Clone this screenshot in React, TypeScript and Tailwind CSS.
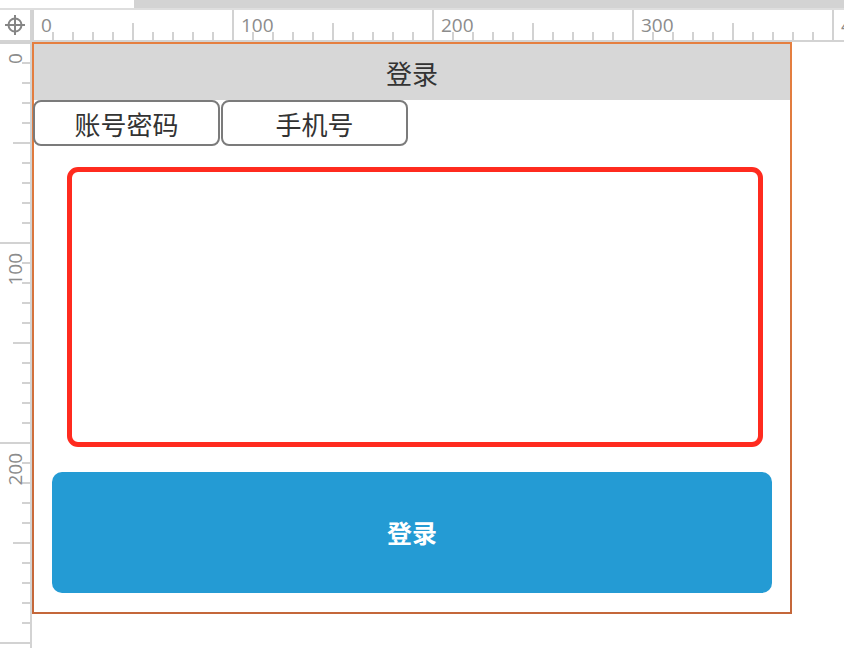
import React from "react";

const CJK = { fontFamily: '"Noto Sans CJK SC", "Noto Sans", sans-serif' };

function TopRuler() {
  const ticks = Array.from({ length: 41 }, (_, k) => k);
  return (
    <svg width="812" height="30" className="block">
      {ticks.map((k) => {
        const x = 1 + k * 20;
        const y1 = k % 10 === 0 ? 0 : k % 5 === 0 ? 13 : 22;
        return <line key={k} x1={x} y1={y1} x2={x} y2={30} stroke="#d2d2d2" strokeWidth="2" />;
      })}
      {[0, 100, 200, 300, 400].map((n, i) => (
        <text
          key={n}
          x={1 + i * 200 + 8}
          y={22}
          fontSize="19"
          fill="#8c8c8c"
          fontFamily='"Open Sans", sans-serif'
        >
          {n}
        </text>
      ))}
    </svg>
  );
}

function LeftRuler() {
  const ticks = Array.from({ length: 31 }, (_, k) => k);
  return (
    <svg width="30" height="606" className="block">
      {ticks.map((k) => {
        const y = 1 + k * 20;
        const x1 = k % 10 === 0 ? 0 : k % 5 === 0 ? 13 : 22;
        return <line key={k} x1={x1} y1={y} x2={30} y2={y} stroke="#d2d2d2" strokeWidth="2" />;
      })}
      {[0, 100, 200].map((n, i) => {
        const y = 1 + i * 200 + 10;
        return (
          <text
            key={n}
            x={22}
            y={y}
            fontSize="19"
            fill="#8c8c8c"
            textAnchor="end"
            transform={`rotate(-90 22 ${y})`}
            fontFamily='"Open Sans", sans-serif'
          >
            {n}
          </text>
        );
      })}
    </svg>
  );
}

function Crosshair() {
  return (
    <svg width="30" height="30" viewBox="0 0 30 30">
      <circle cx="15" cy="15" r="6.5" fill="none" stroke="#858585" strokeWidth="2" />
      <line x1="5" y1="15" x2="25" y2="15" stroke="#858585" strokeWidth="2" />
      <line x1="15" y1="5" x2="15" y2="25" stroke="#858585" strokeWidth="2" />
    </svg>
  );
}

export default function App() {
  return (
    <div className="w-[844px] h-[648px] bg-white flex flex-col overflow-hidden">
      {/* top strip */}
      <div className="h-[8px] flex">
        <div className="w-[134px] bg-white" />
        <div className="flex-1 bg-[#d3d3d3]" />
      </div>
      <div className="h-[2px] bg-[#dedede]" />

      {/* ruler row */}
      <div className="h-[32px] flex border-b-2 border-[#d3d3d3]">
        <div className="w-[32px] border-r-2 border-[#d3d3d3] flex items-center justify-center">
          <Crosshair />
        </div>
        <TopRuler />
      </div>

      <div className="flex-1 flex">
        <div className="w-[32px] border-r-2 border-[#d3d3d3]">
          <LeftRuler />
        </div>

        <div className="flex-1">
          <div className="w-[760px] h-[572px] p-[2px] bg-linear-to-b from-[#e57f40] to-[#c4673a]">
            <div className="h-full bg-white flex flex-col" style={CJK}>
              <div className="h-[56px] bg-[#d7d7d7] flex items-center justify-center text-[26px] text-[#333]">
                登录
              </div>

              <div className="flex gap-[1px] -ml-px">
                <button className="w-[187px] h-[46px] border-2 border-[#7b7b7b] rounded-[8px] flex items-center justify-center text-[26px] text-[#333]">
                  账号密码
                </button>
                <button className="w-[187px] h-[46px] border-2 border-[#7b7b7b] rounded-[8px] flex items-center justify-center text-[26px] text-[#333]">
                  手机号
                </button>
              </div>

              <div className="mt-[21px] ml-[33px] w-[696px] h-[280px] border-[5px] border-[#ff2b1f] rounded-[11px]" />

              <button className="mt-[25px] ml-[18px] w-[720px] h-[121px] rounded-[10px] bg-[#249bd4] text-white font-bold text-[25px] flex items-center justify-center">
                登录
              </button>
            </div>
          </div>
        </div>
      </div>
    </div>
  );
}
